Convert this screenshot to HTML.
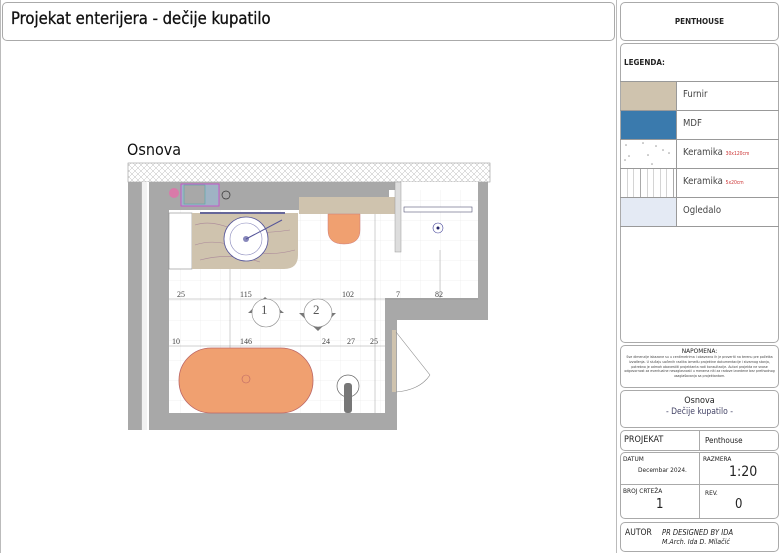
<!DOCTYPE html>
<html><head><meta charset="utf-8"><style>
*{margin:0;padding:0;box-sizing:border-box}
body{width:782px;height:553px;background:#fff;position:relative;overflow:hidden;font-family:"DejaVu Sans Condensed","Liberation Sans",sans-serif;color:#222}
.b{position:absolute;border:1px solid #aaa;border-radius:5px;background:#fff}
.t{position:absolute;white-space:nowrap}
</style></head><body>
<div style="position:absolute;left:0;top:0;width:617px;height:553px;border-left:1px solid #bbb;border-right:1px solid #bbb"></div>
<div class="b" style="left:2px;top:2px;width:613px;height:39px"></div>
<div class="t" style="left:11px;top:9px;font-size:16.5px;color:#111;-webkit-text-stroke:.3px #111">Projekat enterijera - dečije kupatilo</div>
<div class="t" style="left:127px;top:140px;font-size:16px;color:#111">Osnova</div>

<svg style="position:absolute;left:0;top:0" width="617" height="553">
<defs>
<pattern id="x" width="6" height="6" patternUnits="userSpaceOnUse"><path d="M0 0L6 6M6 0L0 6" stroke="#bbb" stroke-width=".5"/></pattern>
<pattern id="g" width="20" height="20" patternUnits="userSpaceOnUse"><path d="M0 0H20M0 0V20" stroke="#e6e6e6" stroke-width=".6"/></pattern>
<clipPath id="c"><path d="M169 190H478V298H385V413H169Z"/></clipPath>
</defs>
<rect x="128" y="163" width="362" height="19" fill="url(#x)" stroke="#999" stroke-width=".6"/>
<path d="M128 182H488V320H397V430H128Z" fill="#a8a8a8"/>
<rect x="142" y="182" width="7" height="248" fill="#fff"/>
<path d="M142 182V430M144 182V430M146 182V430" stroke="#ccc" stroke-width=".5"/>
<path d="M169 190H478V298H385V413H169Z" fill="#fff"/>
<rect x="169" y="190" width="309" height="223" fill="url(#g)" clip-path="url(#c)"/>
<rect x="401" y="182" width="77" height="8" fill="#fff"/>
<rect x="169" y="182" width="130" height="28" fill="#a8a8a8"/>
<rect x="181" y="184" width="38" height="22" fill="#9fb3c4" stroke="#c4c" stroke-width=".8"/>
<rect x="184" y="185" width="21" height="19" fill="#a8a8a8" stroke="#5aa" stroke-width=".6"/>
<circle cx="174" cy="193" r="5" fill="#e6a" opacity=".7"/>
<circle cx="226" cy="195" r="4" fill="none" stroke="#333" stroke-width=".7"/>
<rect x="299" y="182" width="90" height="15" fill="#a8a8a8"/>
<rect x="299" y="197" width="96" height="17" fill="#cfc3ae"/>
<rect x="395" y="182" width="6" height="70" fill="#ddd" stroke="#999" stroke-width=".5"/>
<rect x="404" y="207" width="68" height="5" fill="#fff" stroke="#557" stroke-width=".6"/>
<circle cx="438" cy="228" r="5" fill="none" stroke="#449" stroke-width=".6"/><circle cx="438" cy="228" r="1.5" fill="#226"/>
<rect x="169" y="213" width="23" height="56" fill="#fff" stroke="#888" stroke-width=".6"/>
<path d="M192 213H298V255Q298 269 284 269H192Z" fill="#cfc3ae"/>
<path d="M195 225Q210 220 230 228T290 230M195 245Q215 238 240 248T295 250M200 260Q230 252 260 262" stroke="#a89" fill="none" stroke-width=".6"/>
<rect x="200" y="212" width="85" height="2" fill="#669"/>
<circle cx="246" cy="239" r="22" fill="#fff" stroke="#559" stroke-width=".8"/>
<circle cx="246" cy="239" r="16" fill="none" stroke="#88b" stroke-width=".6"/>
<circle cx="246" cy="239" r="3" fill="#88b"/>
<path d="M246 239L282 220" stroke="#559"/>
<path d="M328 214H360V230Q360 244 344 244Q328 244 328 230Z" fill="#f0a070" stroke="#c77" stroke-width=".5"/>
<g stroke="#888" stroke-width=".4" fill="none">
<path d="M169 299H478M169 346H385M230 269V413M375 214V413M440 250V298"/>
</g>
<g font-family="Liberation Serif,serif" font-size="8" fill="#444">
<text x="177" y="297">25</text><text x="240" y="297">115</text><text x="342" y="297">102</text><text x="396" y="297">7</text><text x="435" y="297">82</text>
<text x="172" y="344">10</text><text x="240" y="344">146</text><text x="322" y="344">24</text><text x="347" y="344">27</text><text x="370" y="344">25</text>
</g>
<path d="M265 297L248 313H284Z" fill="#777"/><circle cx="266" cy="313" r="14" fill="#fff" stroke="#888" stroke-width=".6"/>
<text x="261" y="314" font-family="Liberation Serif,serif" font-size="13" fill="#555">1</text>
<path d="M299 313L336 313L318 331Z" fill="#777"/><circle cx="318" cy="313" r="14" fill="#fff" stroke="#888" stroke-width=".6"/>
<text x="313" y="314" font-family="Liberation Serif,serif" font-size="13" fill="#555">2</text>
<rect x="392" y="330" width="4" height="62" fill="#cfc3ae"/>
<path d="M396 332L430 375M396 392Q420 390 430 375" stroke="#888" fill="none" stroke-width=".6"/>
<rect x="179" y="348" width="134" height="65" rx="32" fill="#f0a070" stroke="#b66" stroke-width=".8"/>
<circle cx="246" cy="379" r="4" fill="none" stroke="#b66" stroke-width=".6"/>
<circle cx="348" cy="386" r="11" fill="#fff" stroke="#666" stroke-width=".7"/>
<rect x="344" y="383" width="8" height="30" rx="3" fill="#777"/>
</svg>

<div class="b" style="left:620px;top:2px;width:159px;height:39px"></div>
<div class="t" style="left:620px;width:159px;top:17px;text-align:center;font-size:8px;font-weight:bold">PENTHOUSE</div>
<div class="b" style="left:620px;top:43px;width:159px;height:300px"></div>
<div class="t" style="left:624px;top:58px;font-size:8px;font-weight:bold">LEGENDA:</div>
<div style="position:absolute;left:620px;top:81px;width:159px;border-top:1px solid #999"></div>
<div style="position:absolute;left:621px;top:82px;width:56px;height:28px;background:#cfc3ae"></div>
<div style="position:absolute;left:621px;top:110px;width:56px;height:29px;background:#3a7aad"></div>
<svg style="position:absolute;left:621px;top:140px" width="56" height="28"><g fill="#999"><circle cx="5" cy="5" r=".8"/><circle cx="22" cy="3" r=".8"/><circle cx="35" cy="6" r=".8"/><circle cx="42" cy="10" r=".8"/><circle cx="8" cy="16" r=".8"/><circle cx="27" cy="15" r=".8"/><circle cx="48" cy="13" r=".8"/><circle cx="31" cy="24" r=".8"/><circle cx="4" cy="20" r=".8"/></g></svg>
<div style="position:absolute;left:621px;top:168px;width:56px;height:29px;background:repeating-linear-gradient(90deg,#fff 0 6px,#aaa 6px 6.6px)"></div>
<div style="position:absolute;left:621px;top:197px;width:56px;height:29px;background:#e4eaf4"></div>
<div style="position:absolute;left:676px;top:82px;height:144px;border-left:1px solid #999"></div>
<div style="position:absolute;left:620px;top:110px;width:159px;border-top:1px solid #999"></div>
<div style="position:absolute;left:620px;top:139px;width:159px;border-top:1px solid #999"></div>
<div style="position:absolute;left:620px;top:168px;width:159px;border-top:1px solid #999"></div>
<div style="position:absolute;left:620px;top:197px;width:159px;border-top:1px solid #999"></div>
<div style="position:absolute;left:620px;top:226px;width:159px;border-top:1px solid #999"></div>
<div class="t" style="left:683px;top:89px;font-size:9.5px;color:#444">Furnir</div>
<div class="t" style="left:683px;top:118px;font-size:9.5px;color:#444">MDF</div>
<div class="t" style="left:683px;top:147px;font-size:9.5px;color:#444">Keramika <span style="font-size:5px;color:#c33">30x120cm</span></div>
<div class="t" style="left:683px;top:176px;font-size:9.5px;color:#444">Keramika <span style="font-size:5px;color:#c33">5x20cm</span></div>
<div class="t" style="left:683px;top:205px;font-size:9.5px;color:#444">Ogledalo</div>

<div class="b" style="left:620px;top:345px;width:159px;height:43px"></div>
<div class="t" style="left:620px;width:159px;top:347px;text-align:center;font-size:6.5px">NAPOMENA:</div>
<div class="t" style="left:622px;width:155px;top:355px;text-align:center;font-size:3.6px;line-height:4.8px;white-space:normal;color:#444">Sve dimenzije iskazane su u centimetrima i obavezno ih je proveriti na terenu pre početka izvođenja. U slučaju uočenih razlika između projektne dokumentacije i stvarnog stanja, potrebno je odmah obavestiti projektanta radi konsultacije. Autori projekta ne snose odgovornost za eventualne nesaglasnosti u merama niti za radove izvedene bez prethodnog usaglašavanja sa projektantom.</div>
<div class="b" style="left:620px;top:390px;width:159px;height:38px"></div>
<div class="t" style="left:620px;width:159px;top:396px;text-align:center;font-size:9px">Osnova</div>
<div class="t" style="left:620px;width:159px;top:407px;text-align:center;font-size:8.5px;color:#446">- Dečije kupatilo -</div>
<div class="b" style="left:620px;top:430px;width:159px;height:21px"></div>
<div style="position:absolute;left:699px;top:430px;height:21px;border-left:1px solid #aaa"></div>
<div class="t" style="left:624px;top:435px;font-size:9px">PROJEKAT</div>
<div class="t" style="left:705px;top:436px;font-size:8px">Penthouse</div>
<div class="b" style="left:620px;top:452px;width:159px;height:67px"></div>
<div style="position:absolute;left:699px;top:452px;height:67px;border-left:1px solid #aaa"></div>
<div style="position:absolute;left:620px;top:484px;width:159px;border-top:1px solid #aaa"></div>
<div class="t" style="left:623px;top:455px;font-size:6.5px">DATUM</div>
<div class="t" style="left:638px;top:466px;font-size:6.5px">Decembar 2024.</div>
<div class="t" style="left:703px;top:455px;font-size:6.5px">RAZMERA</div>
<div class="t" style="left:729px;top:464px;font-size:14px">1:20</div>
<div class="t" style="left:623px;top:487px;font-size:6.5px">BROJ CRTEŽA</div>
<div class="t" style="left:656px;top:497px;font-size:13px">1</div>
<div class="t" style="left:705px;top:489px;font-size:6.5px">REV.</div>
<div class="t" style="left:735px;top:497px;font-size:13px">0</div>
<div class="b" style="left:620px;top:522px;width:159px;height:30px"></div>
<div class="t" style="left:625px;top:528px;font-size:8.5px">AUTOR</div>
<div class="t" style="left:662px;top:528px;font-size:7.5px;font-style:italic">PR DESIGNED BY IDA</div>
<div class="t" style="left:662px;top:538px;font-size:7px;font-style:italic">M.Arch. Ida D. Milačić</div>
</body></html>
